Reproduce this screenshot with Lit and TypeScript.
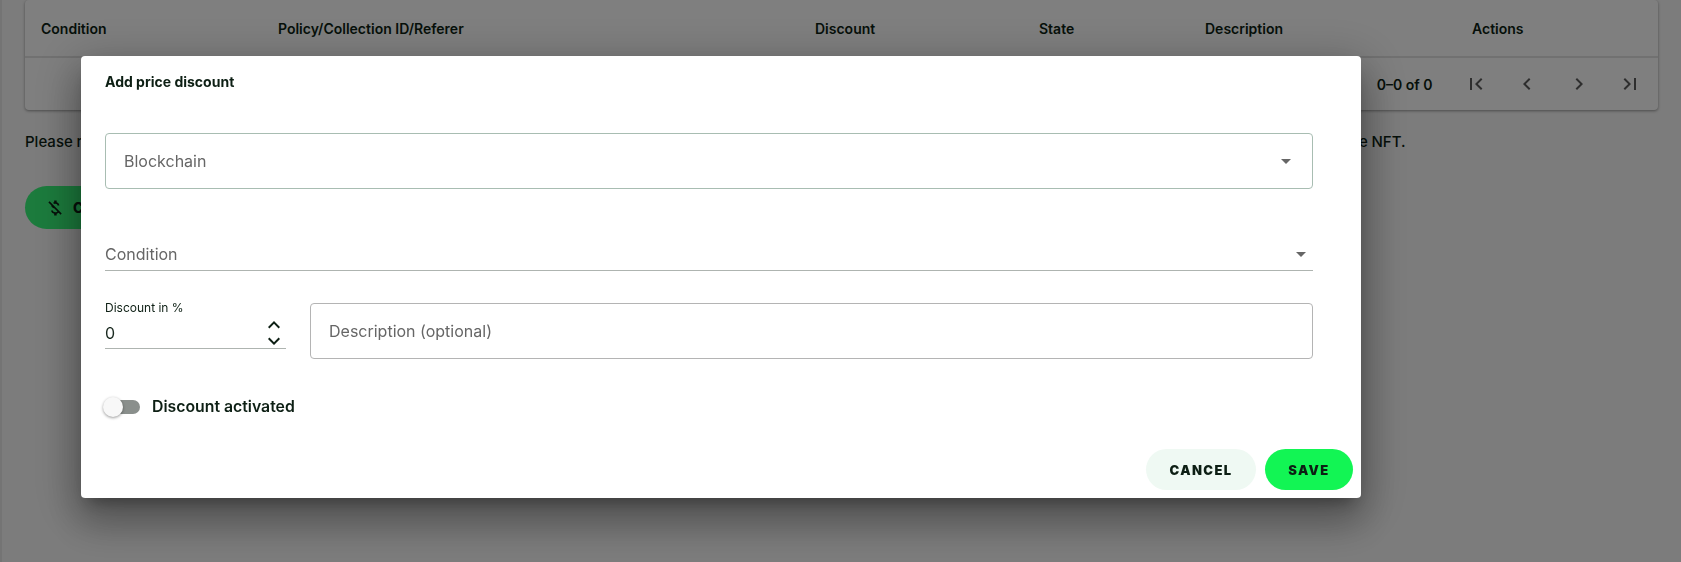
import { LitElement, html, css, svg } from "lit";
import { customElement } from "lit/decorators.js";

const P: Record<string, string> = {
  first: "M18.41 16.59 13.82 12l4.59-4.59L17 6l-6 6 6 6zM6 6h2v12H6z",
  prev: "M15.41 16.59 10.83 12l4.58-4.59L14 6l-6 6 6 6 1.41-1.41z",
  next: "M8.59 16.59 13.17 12 8.59 7.41 10 6l6 6-6 6-1.41-1.41z",
  last: "M5.59 7.41 10.18 12l-4.59 4.59L7 18l6-6-6-6zM16 6h2v12h-2z",
  money: "M12.5 6.9c1.78 0 2.44.85 2.5 2.1h2.21c-.07-1.72-1.12-3.3-3.21-3.81V3h-3v2.16c-.53.12-1.03.3-1.48.54l1.47 1.47c.41-.17.91-.27 1.51-.27zM5.47 3.92 4.06 5.33 7.5 8.77c0 2.08 1.56 3.21 3.91 3.91l3.51 3.51c-.34.48-1.05.91-2.42.91-2.06 0-2.87-.92-2.98-2.1h-2.2c.12 2.19 1.76 3.42 3.68 3.83V21h3v-2.15c.96-.18 1.82-.55 2.45-1.12l2.22 2.22 1.41-1.41L5.47 3.92z",
  drop: "m7 10 5 5 5-5z",
  up: "M7.41 15.41 12 10.83l4.59 4.58L18 14l-6-6-6 6z",
  down: "M7.41 8.59 12 13.17l4.59-4.58L18 10l-6 6-6-6z",
};
const icon = (n: string, size = 24) =>
  html`<svg class="ic" width=${size} height=${size} viewBox="0 0 24 24" fill="currentColor">${svg`<path d=${P[n]}></path>`}</svg>`;

@customElement("app-root")
export class AppRoot extends LitElement {
  static styles = css`
    :host { display: block; height: 562px; overflow: hidden; font-family: Inter, "Liberation Sans", sans-serif; color: #0d1f14; }
    * { box-sizing: border-box; }
    .ic { display: block; flex: none; }
    .page { height: 562px; background: #f8f8f8; padding: 0 24px 0 23px; border-left: 2px solid #e8e8e8; }
    .card { width: 1633px; height: 110px; background: #fff; border-radius: 4px; box-shadow: 0 1px 3px rgba(0,0,0,.4); }
    .head { height: 58px; display: grid; grid-template-columns: 237px 537px 224px 166px 267px 1fr; align-items: center; padding-left: 16px; border-bottom: 2px solid #e2e2e2; font-size: 14px; font-weight: 600; }
    .foot { height: 52px; display: flex; align-items: center; justify-content: flex-end; font-size: 14px; font-weight: 600; padding-right: 16px; }
    .count { margin-right: 31px; }
    .pager { display: flex; gap: 27.5px; color: #5c5c5c; }
    .note { margin: 23px 0 0; font-size: 15px; font-weight: 500; line-height: 18px; white-space: nowrap; word-spacing: -0.25px; }
    .create { margin-top: 35px; width: 210px; height: 43px; border-radius: 22px; background: #38f67a; display: flex; align-items: center; padding-left: 20px; gap: 8px; font-size: 14px; font-weight: 800; letter-spacing: 1px; }
    .backdrop { position: fixed; inset: 0; background: rgba(0,0,0,.5); }
    .modal { margin: 56px 0 0 81px; width: 1280px; height: 442px; background: #fff; border-radius: 4px; padding: 17px 48px 0 24px; display: flex; flex-direction: column; box-shadow: 0 11px 15px -7px rgba(0,0,0,.3), 0 24px 38px 3px rgba(0,0,0,.22), 0 9px 46px 8px rgba(0,0,0,.2); }
    .title { font-size: 14px; font-weight: 700; line-height: 18px; }
    .field { border: 1px solid #a8bdb2; border-radius: 4px; height: 56px; display: flex; align-items: center; padding: 0 14px 0 18px; font-size: 16px; color: #666; }
    .field .ic { color: #666; }
    .chain { margin-top: 42px; justify-content: space-between; }
    .cond { margin-top: 46px; height: 36px; padding-top: 3px; border-bottom: 1px solid #aeb4b0; display: flex; align-items: center; justify-content: space-between; font-size: 16px; color: #666; }
    .row { margin-top: 32px; display: flex; gap: 24px; }
    .num { width: 181px; height: 49px; margin-top: -3px; border-bottom: 1px solid #aeb4b0; position: relative; font-size: 12px; color: #0d1f14; line-height: 15px; }
    .val { font-size: 16px; line-height: 20px; margin-top: 8px; color: #1a2a20; }
    .step { position: absolute; right: 0; top: 13px; display: flex; flex-direction: column; }
    .step .ic + .ic { margin-top: -8px; }
    .desc { flex: 1; border-color: #b4b4b4; }
    .toggle { margin-top: 38px; display: flex; align-items: center; font-size: 15.8px; font-weight: 600; }
    .track { width: 34px; height: 14px; border-radius: 7px; background: #8a8f8c; position: relative; margin-right: 12px; margin-left: 1px; }
    .thumb { position: absolute; left: -3px; top: -3px; width: 20px; height: 20px; border-radius: 50%; background: #f8f8f8; box-shadow: 0 1px 3px rgba(0,0,0,.4); }
    .actions { margin-top: 33px; display: flex; justify-content: flex-end; gap: 9px; margin-right: -40px; }
    .btn { height: 41px; border-radius: 21px; display: flex; align-items: center; justify-content: center; font-size: 13px; font-weight: 900; letter-spacing: 1.4px; }
    .cancel { width: 110px; background: #eff9f3; }
    .save { width: 88px; background: #12f554; }
  `;

  render() {
    return html`
      <div class="page">
        <div class="card">
          <div class="head">
            <span>Condition</span><span>Policy/Collection ID/Referer</span><span>Discount</span><span>State</span><span>Description</span><span>Actions</span>
          </div>
          <div class="foot">
            <span class="count">0–0 of 0</span>
            <div class="pager">${icon("first")}${icon("prev")}${icon("next")}${icon("last")}</div>
          </div>
        </div>
        <p class="note">Please remember that discounts are applied automatically as soon as the conditions are met. If several conditions apply, the customer always receives the highest discount when buying the NFT.</p>
        <div class="create">${icon("money", 20)}<span>CREATE</span></div>
      </div>
      <div class="backdrop">
        <div class="modal">
          <div class="title">Add price discount</div>
          <div class="field chain"><span>Blockchain</span>${icon("drop")}</div>
          <div class="cond"><span>Condition</span>${icon("drop")}</div>
          <div class="row">
            <div class="num">
              Discount in %
              <div class="val">0</div>
              <div class="step">${icon("up", 24)}${icon("down", 24)}</div>
            </div>
            <div class="field desc">Description (optional)</div>
          </div>
          <div class="toggle"><div class="track"><div class="thumb"></div></div>Discount activated</div>
          <div class="actions"><div class="btn cancel">CANCEL</div><div class="btn save">SAVE</div></div>
        </div>
      </div>
    `;
  }
}
